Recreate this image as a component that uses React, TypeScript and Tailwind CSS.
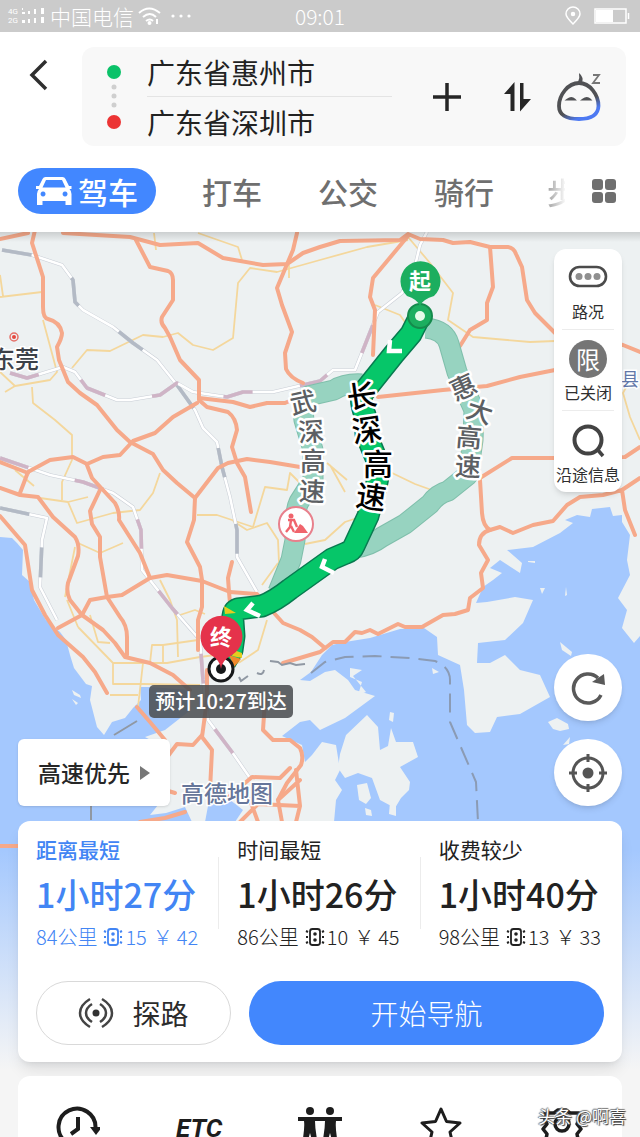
import { useState } from "react";

interface RouteOption {
  id: string;
  title: string;
  duration: string;
  distance: string;
  lights: number;
  toll: number;
}

const routes: RouteOption[] = [
  { id: "short", title: "距离最短", duration: "1小时27分", distance: "84公里", lights: 15, toll: 42 },
  { id: "fast", title: "时间最短", duration: "1小时26分", distance: "86公里", lights: 10, toll: 45 },
  { id: "cheap", title: "收费较少", duration: "1小时40分", distance: "98公里", lights: 13, toll: 33 },
];

const otherModes = ["打车", "公交", "骑行"];

const highways = [
  "M0 239L28 233M35 230L32 243L43 277L43 307Q43 318 48 319Q60 322 62 333Q62 338 57 347L59 360L68 382L80 393L97 405L117 430L130 442L153 454L163 470L177 483L195 498L194 520L187 542L200 567L202 580L202 607L198 620L198 650",
  "M63 233L130 237L160 245L198 243L223 258L263 265L287 264L303 253L320 247L340 241L400 240L408 234L420 239L443 240L453 243L470 242L490 247L508 247Q514 248 516 254L522 267L527 300L535 313L555 333L600 340L623 345L640 352",
  "M136 240L150 267L168 271Q173 273 173 280L173 300L162 317Q160 323 165 328L170 337L180 360L199 380L199 400L207 407L228 412Q236 418 237 430L232 447L237 463L245 477L251 512",
  "M297 233L293 250L277 288L282 305L292 332L285 353L286 369Q290 378 303 383",
  "M199 398L233 402L250 407L267 403L285 403L310 392",
  "M197 403L173 417L155 433L133 441L120 455L103 457L87 464L73 457L50 460L28 472L20 493M0 462L28 473",
  "M0 488L20 495L38 497L53 517L75 537Q80 545 78 556L68 583Q66 593 70 600L82 615L103 630L115 643L125 657L150 663L173 675L190 690",
  "M87 465L92 478L115 503Q120 512 119 520L140 553L150 578",
  "M100 490L90 511L92 524L100 537L100 557L107 597L120 617Q127 625 127 637L127 655",
  "M0 516L25 545L32 590L45 615L58 635L83 657L95 672L107 693",
  "M58 628L82 615L90 600L107 597L122 595L150 578L167 575L202 581L230 592L257 594L283 623L300 630L312 637L325 648",
  "M283 663L320 652L333 642L345 642L355 632L362 633L370 630L378 634L390 628L398 624L405 627L422 627L443 615L455 614L468 610L470 598L483 588L481 573L488 560L479 545Q479 533 490 530Q483 526 482 513L480 480",
  "M480 478L512 458L555 458L625 457L640 447",
  "M490 530L500 527L513 533L533 525L553 521L567 505L580 497L603 495L622 490L640 478M622 490L625 510L635 535",
  "M408 236L373 278L370 297L375 310L373 355",
  "M490 247L493 287L487 303L487 320L470 330L460 346",
  "M378 397L443 390L487 386L520 377L555 370",
  "M195 498L218 468L228 463L247 459L270 462L300 467",
  "M232 562L228 578L229 592L230 603",
  "M207 670L207 700L202 737L212 750L210 790",
  "M137 707L150 722L165 740M165 760L177 744L193 745L202 735M165 790L175 793",
  "M265 700L263 730L273 740L290 740L300 748Q304 756 301 765L287 783L278 800L282 822",
  "M225 800L245 783L252 777L280 778L290 768M240 822L258 804L300 806M262 790L250 800L258 822M278 800L300 780M296 822L300 806L296 770M140 822L165 818L185 812",
  "M0 846L24 846",
];

const localRoads = [
  "M0 297L42 292M0 275L3 296M43 320L57 372L50 380L15 386L5 392M0 372L15 386",
  "M72 368L87 350L110 351L143 335L163 337L178 333L193 345L213 350L233 338L238 283L250 268L277 272L320 260L367 247L408 240",
  "M198 233L238 247L242 260M154 233L156 250M289 265L289 278",
  "M32 387L33 403L55 420L72 435L72 460L62 482L62 500M15 470L34 486",
  "M40 498L68 502L88 497M68 502L77 523L113 513L140 510L153 493L160 473",
  "M197 515L217 515L253 527L265 487L287 490L290 473L300 483",
  "M78 627L113 663L167 663L200 657L215 655M113 663L113 684L143 684L200 685M150 663L152 645L163 645L198 640M143 663L138 707M110 695L138 695",
  "M160 580L170 600L177 620L178 657M163 645L163 663M75 547L65 597M78 543L100 553L123 543M67 600L78 627",
  "M180 615L195 610L205 614M233 521L247 530L267 523L278 540L279 563M267 620L258 650L240 662L215 668M278 563L262 585M305 544L325 540L345 522L360 517",
  "M408 237L430 263L453 293L448 320L473 337L530 342L555 341M375 305L400 315L407 325",
  "M327 463L347 480M390 472L415 484L440 493M640 440L630 417L623 393L630 380M90 615L98 642L110 643M330 465L345 492",
];

const railGrey = "M2 250L32 255L62 265L73 280L75 302L83 310L113 327L133 343L157 360L177 385L195 410L203 428L217 442L222 467L230 497L237 530L237 557L257 592";
const railPurple = "M10 373L27 378L63 367L75 372L87 388L117 400L130 400L160 395L177 383L193 392L227 397L243 392L273 392L320 381L333 370L355 370L365 345L378 312L402 293L415 266L420 245L427 232";
const railWest = "M0 458L50 475L83 482L113 493L133 507L141 530L142 570L172 608L200 640L203 680L208 720L232 752L250 778";
const railCoast = "M0 508L47 518L42 540L40 587L57 620";

const sea = [
  // western bay down to the bottom of the sheet
  "M0 537L12 538L17 543L23 550L22 575L30 582L34 600L46 620L60 632L66 640L70 655L74 668L86 684L92 686L90 700L97 727L104 735L112 722L125 718L133 708L141 700L140 687L150 687L190 690L188 712L165 730L145 737L160 745L170 790L150 815L166 813L185 807L192 822L640 822L640 1137L0 1137Z",
  // harbour inlets
  "M300 680L311 672L322 655L332 645L345 642L370 638L400 629L424 628L437 637L438 655L460 665L464 690L467 725L475 733L490 732L497 717L520 714L550 697L540 675L520 670L505 655L490 663L477 663L478 643L505 640L523 623L533 600L515 597L487 602L476 603L483 587L493 580L502 573L490 568L500 560L520 573L522 563L507 550L533 547L560 533L573 523L565 520L577 515L590 517L592 509L610 507L613 516L622 515L622 522L630 535L627 560L630 575L618 598L627 610L622 628L634 643L640 636L640 822L334 822L336 800L342 790L335 780L340 770L336 745L322 742L312 755L305 762L302 745L282 736L300 722L310 720L320 730L345 718L375 696L355 690L348 680L335 670L325 672L310 681Z",
  "M208 806L225 796L243 810L235 822L205 822Z",
];

const islands = [
  "M340 754L346 735L367 715L378 727L380 750L388 746L391 728L396 742L413 742L418 757L400 767L410 782L409 790L401 798L395 808L380 800L372 778L358 773L345 778L338 768Z",
  "M350 668L362 670L353 676L366 692L358 695L362 682L350 677Z",
  "M357 785L367 783L371 798L366 804L359 800Z",
  "M390 712L394 713L393 722L389 720Z",
  "M548 722L557 718L568 724L569 729L560 731L553 729Z",
  "M560 642L572 652L571 656L562 650Z",
  "M563 745L570 737L569 744Z",
  "M528 561L535 561L535 563L528 562Z",
  "M540 588L545 588L542 594Z",
  "M566 587L567 595L565 596Z",
  "M432 668L439 672L433 674Z",
  "M390 802L396 800L396 816L389 814Z",
  "M365 808L371 810L372 816L366 815Z",
  "M72 690L80 695L81 698L74 695Z",
  "M72 699L78 703L76 705Z",
];

const mainRoute = "M420 316L411 334L394 354L362 394Q360 402 365 415L366 434L376 458Q380 472 376 487L368 516L354 546Q352 551 346 553L332 559L290 589Q275 601 262 606L238 609Q232 611 233 622L234 636L232 650L225 662";
const wushen = "M362 384Q345 383 334 390L308 396Q302 405 304 420L313 450L313 480L299 502Q294 512 295 540L291 560L278 592";
const huida = "M426 328Q445 330 449 344L457 372L474 410L473 440L468 475L448 491Q437 494 430 504L405 524L382 537Q370 546 355 548";

interface RoadNameProps {
  chars: [string, number, number, number][];
  size: number;
  fill: string;
}

function RoadName({ chars, size, fill }: RoadNameProps) {
  return (
    <g
      fontSize={size}
      fontWeight={500}
      fill={fill}
      stroke="#fff"
      strokeWidth={5}
      strokeLinejoin="round"
      paintOrder="stroke"
      textAnchor="middle"
    >
      {chars.map(([char, x, y, angle]) => (
        <text key={char} transform={`translate(${x} ${y}) rotate(${angle})`} y={10}>
          {char}
        </text>
      ))}
    </g>
  );
}

function Rail({ d, color }: { d: string; color: string }) {
  return (
    <g fill="none" strokeLinejoin="round">
      <path d={d} stroke="#c9ced6" strokeWidth={3.6} />
      <path d={d} stroke="#fff" strokeWidth={2.6} />
      <path d={d} stroke={color} strokeWidth={3.6} strokeDasharray="30 48" />
    </g>
  );
}

function MapCanvas() {
  return (
    <svg viewBox="0 232 640 905" className="block h-auto w-full" aria-label="路线地图">
      <defs>
        <linearGradient id="sheetFade" x1="0" y1="0" x2="0" y2="1">
          <stop offset="0" stopColor="#f5f5f5" stopOpacity="0" />
          <stop offset="1" stopColor="#f5f5f5" />
        </linearGradient>
        <linearGradient id="topShade" x1="0" y1="0" x2="0" y2="1">
          <stop offset="0" stopColor="#000" stopOpacity=".14" />
          <stop offset="1" stopColor="#000" stopOpacity="0" />
        </linearGradient>
      </defs>
      <rect y="232" width="640" height="905" fill="#edf1f2" />
      <g fill="#a4c8fe">
        {sea.map((d) => (
          <path key={d} d={d} />
        ))}
      </g>
      <g fill="#edf1f2">
        {islands.map((d) => (
          <path key={d} d={d} />
        ))}
      </g>
      <g fill="none" stroke="#f4d79c" strokeWidth={1.8} strokeLinejoin="round">
        {localRoads.map((d) => (
          <path key={d} d={d} />
        ))}
      </g>
      <Rail d={railCoast} color="#b3bac5" />
      <Rail d={railGrey} color="#b3bac5" />
      <Rail d={railWest} color="#cfb4c6" />
      <Rail d={railPurple} color="#cfb4c6" />
      <g fill="none" stroke="#f6a98a" strokeWidth={4} strokeLinejoin="round" strokeLinecap="round">
        {highways.map((d) => (
          <path key={d} d={d} />
        ))}
      </g>
      <path
        d="M311 673L325 662L345 657L375 656L410 658L435 661Q450 667 450 680L450 722L476 782L478 822"
        fill="none"
        stroke="#8b9bb4"
        strokeWidth={2}
        strokeDasharray="19 9"
      />
      <path
        d="M114 735L137 721M91 806V820M239 677l2 4 7-5M257 673q6 3 7-3M270 661l8 1 4 3 8-2 6 2 9-1"
        fill="none"
        stroke="#9098a3"
        strokeWidth={2}
      />

      <circle cx="14" cy="337" r="4" fill="none" stroke="#e57068" strokeWidth={1.5} />
      <circle cx="14" cy="337" r="2" fill="#e5483f" />
      <g fontSize={24} fontWeight={500} stroke="#fff" strokeWidth={3} paintOrder="stroke">
        <text x="-9" y="368" fill="#3c4148">东莞</text>
        <text x="621" y="386" fontSize={18} fontWeight={400} fill="#6277a8">县</text>
        <text x="181" y="802" fontSize={23} fill="#66769a">高德地图</text>
      </g>

      <g fill="none" strokeLinejoin="round">
        <path d={wushen} stroke="#7fbfab" strokeWidth={21} />
        <path d={wushen} stroke="#97d3c0" strokeWidth={19} />
        <path d={huida} stroke="#7fbfab" strokeWidth={21} />
        <path d={huida} stroke="#97d3c0" strokeWidth={19} />
        <path d={mainRoute} stroke="#087a50" strokeWidth={23} />
        <path d={mainRoute} stroke="#06c669" strokeWidth={20} />
      </g>
      <path d="M224 606L236 613L225 614ZM234 650L242 653L242 658L232 656Z" fill="#e5cc1f" />
      <path d="M229 655L241 659L234 667Z" fill="#f08a2d" />
      <path
        d="M390 340L389 351L402 351M325 559L322 567L334 573M253 603L247 610L260 616"
        fill="none"
        stroke="#fff"
        strokeWidth={4.5}
      />

      <RoadName
        size={26}
        fill="#5c5f63"
        chars={[["武", 303, 402, -12], ["深", 311, 431, -4], ["高", 313, 461, 0], ["速", 312, 491, 3]]}
      />
      <RoadName
        size={26}
        fill="#5c5f63"
        chars={[["惠", 463, 387, -25], ["大", 480, 411, 18], ["高", 469, 437, 5], ["速", 468, 466, 3]]}
      />
      <RoadName
        size={30}
        fill="#000"
        chars={[["长", 362, 397, -8], ["深", 367, 431, -8], ["高", 378, 465, 0], ["速", 371, 498, 8]]}
      />

      <circle cx="296" cy="524" r="17" fill="#fff" stroke="#e8808c" strokeWidth={2} />
      <circle cx="291" cy="516" r="2.5" fill="#f0646c" />
      <path d="M288 520L294 520L297 527M291 520L290 527L286 532M291 526L294 532" fill="none" stroke="#f0646c" strokeWidth={2.4} />
      <path d="M294 533L300 524L303 526L308 533Z" fill="#f0646c" />

      <circle cx="420" cy="316" r="12" fill="#1cae5f" stroke="#158a4c" strokeWidth={2} />
      <circle cx="420" cy="316" r="5" fill="#e6fbe9" />
      <path d="M420 306Q417 299 407 296A20 20 0 1 1 434 296Q423 299 420 306Z" fill="#1cae5f" />
      <circle cx="221" cy="669" r="12" fill="#fff" stroke="#16181a" strokeWidth={3} />
      <circle cx="221" cy="669" r="5" fill="#16181a" />
      <path d="M221 669Q220 660 211 655A21 21 0 1 1 232 655Q222 660 221 669Z" fill="#e5324b" />
      <g fontSize={22} fontWeight={700} fill="#fff" textAnchor="middle">
        <text x="420" y="289">起</text>
        <text x="221" y="645">终</text>
      </g>
      <rect x="149" y="685" width="144" height="33" rx="5" fill="#4c4f52" fillOpacity=".88" />
      <text x="221" y="709" fontSize={20} fontWeight={500} fill="#fff" textAnchor="middle">
        预计10:27到达
      </text>

      <rect y="232" width="640" height="10" fill="url(#topShade)" />
      <rect y="850" width="640" height="220" fill="url(#sheetFade)" />
      <rect y="1069" width="640" height="68" fill="#f5f5f5" />
    </svg>
  );
}

function StatusBar() {
  return (
    <div className="grid h-8 grid-cols-3 items-center bg-[#cbcbcb] px-2 text-white">
      <div className="flex items-center gap-1">
        <div className="flex flex-col font-['Roboto',sans-serif] text-[8px] leading-[9px]">
          <span>4G</span>
          <span>2G</span>
        </div>
        <svg viewBox="0 0 24 18" className="h-[18px] w-6" fill="#fff" aria-hidden="true">
          <path d="M0 1h1v2H0zM0 5h3v2H0zM0 13h3v3H0zM6 4h2v3H6zM6 12h2v4H6zM12 2h2v5h-2zM12 11h2v5h-2zM19 1h3v6h-3zM19 10h3v6h-3z" />
        </svg>
        <span className="text-[21px] leading-8 font-light whitespace-nowrap">中国电信</span>
        <svg viewBox="0 0 24 20" className="h-5 w-6" fill="none" stroke="#fff" strokeWidth="2" aria-hidden="true">
          <path d="M1 7q10-9 21 0M5 11q7-6 13 0M8 15q4-3 7 0" />
          <circle cx="11.500" cy="17" r="1" fill="#fff" />
          <path d="M19 13v5" />
        </svg>
        <svg viewBox="0 0 22 4" className="ml-1 h-1 w-[22px]" fill="#fff" aria-hidden="true">
          <circle cx="3" cy="2" r="1.600" />
          <circle cx="11" cy="2" r="1.600" />
          <circle cx="19" cy="2" r="1.600" />
        </svg>
      </div>
      <span className="text-center text-[21px] leading-8 font-light">09:01</span>
      <div className="flex items-center justify-end gap-3 pr-0.5">
        <svg viewBox="0 0 18 20" className="h-5 w-[18px]" fill="none" stroke="#fff" strokeWidth="1.500" aria-hidden="true">
          <path d="M9 18Q2 11 2 8a7 7 0 0 1 14 0q0 3-7 10z" />
          <circle cx="9" cy="8" r="1.500" fill="#fff" />
        </svg>
        <svg viewBox="0 0 36 16" className="h-4 w-9" fill="none" stroke="#fff" strokeWidth="1.500" aria-hidden="true">
          <path d="M1 1h31v14H1zM34.500 5v6" />
          <path d="M2 2h17v12H2z" fill="#fff" stroke="none" />
        </svg>
      </div>
    </div>
  );
}

function SearchHeader() {
  const [from, setFrom] = useState("广东省惠州市");
  const [to, setTo] = useState("广东省深圳市");

  return (
    <header className="relative z-10 bg-white pt-[15px] pb-[18px]">
      <div className="flex pr-3.5">
        <button aria-label="返回" className="flex w-[82px] justify-center pt-3 pr-1">
          <svg viewBox="0 0 20 32" className="h-8 w-5" fill="none" stroke="#2f2f2f" strokeWidth="3.500">
            <path d="M17 2L3 16L17 30" />
          </svg>
        </button>
        <div className="flex flex-1 items-center rounded-xl bg-[#f8f8f8] pr-6 pl-6">
          <svg viewBox="0 0 16 66" className="h-[66px] w-4" aria-hidden="true">
            <circle cx="8" cy="8" r="7" fill="#0bc269" />
            <g fill="#cfcfcf">
              <circle cx="8" cy="23" r="2.500" />
              <circle cx="8" cy="32" r="2.500" />
              <circle cx="8" cy="41" r="2.500" />
            </g>
            <circle cx="8" cy="58" r="7" fill="#ec3434" />
          </svg>
          <div className="ml-[25px] min-w-0 flex-1 text-[28px] text-[#222]">
            <input
              aria-label="起点"
              value={from}
              onChange={(e) => setFrom(e.target.value)}
              className="block h-[50px] w-full border-b border-[#e4e4e4] bg-transparent outline-none"
            />
            <input
              aria-label="终点"
              value={to}
              onChange={(e) => setTo(e.target.value)}
              className="block h-[49px] w-full bg-transparent outline-none"
            />
          </div>
          <div className="ml-10 flex items-center">
            <button aria-label="添加途经点">
              <svg viewBox="0 0 30 30" className="h-[30px] w-[30px]" stroke="#262626" strokeWidth="3.500">
                <path d="M15 1v28M1 15h28" />
              </svg>
            </button>
            <button aria-label="交换起终点" className="ml-10">
              <svg viewBox="0 0 30 30" className="h-[30px] w-[30px]" fill="#262626">
                <path d="M12.500 0V29H8.500V12H2zM18 1H21.500V17H29L18 29.500z" />
              </svg>
            </button>
            <button aria-label="语音助手" className="ml-6">
              <svg viewBox="0 0 46 50" className="h-[50px] w-[46px]" fill="none">
                <defs>
                  <linearGradient id="face" x1="0.200" y1="0" x2="0.800" y2="1">
                    <stop offset="0.600" stopColor="#505154" />
                    <stop offset="0.850" stopColor="#4d79f2" />
                  </linearGradient>
                </defs>
                <path
                  d="M23 11C34 11 42.500 23 42.500 34Q42 47 23 47Q3 47 3 34C3 23 12 11 23 11z"
                  stroke="url(#face)"
                  strokeWidth="3.800"
                />
                <path d="M22 10Q24 6 23 1Q28 5 26 11z" fill="#505154" />
                <path d="M11.500 27.500q4-3 7 0zM27 27.500q4-3 7 0z" fill="#505154" stroke="#505154" strokeWidth="2" />
                <path d="M37 3h6l-6 8h7" stroke="#777" strokeWidth="1.800" />
              </svg>
            </button>
          </div>
        </div>
      </div>
      <nav className="mt-[22px] flex items-center pr-6 pl-[18px] text-[30px] leading-[46px] font-medium text-[#6f6f6f]">
        <button aria-current="page" className="flex h-[46px] w-[138px] items-center justify-center gap-1.5 rounded-full bg-[#4287ff] text-white">
          <svg viewBox="0 0 36 30" className="h-[30px] w-9" aria-hidden="true">
            <path
              fill="#fff"
              fillRule="evenodd"
              d="M9.500 1h17q2 0 3 2l3.500 7h2.500v3h-2q2 2 2 5v11h-6v-4h-23v4H1V18q0-3 2-5H0v-3h3l3.500-7q1-2 3-2zM10 4L6.500 11.500h23L26 4zM7 15.500a2.500 2.500 0 1 0 .1 0zM29 15.500a2.500 2.500 0 1 0 .1 0z"
            />
          </svg>
          驾车
        </button>
        {otherModes.map((mode) => (
          <button key={mode} className="ml-[46px] w-[60px] whitespace-nowrap nth-[n+3]:ml-14">
            {mode}
          </button>
        ))}
        <button
          aria-label="步行"
          className="ml-[53px] w-[18px] overflow-hidden bg-gradient-to-r from-[#a0a0a0] to-[#f8f8f8] bg-clip-text text-left text-transparent"
        >
          步
        </button>
        <button aria-label="更多出行方式" className="ml-auto">
          <svg viewBox="0 0 24 24" className="h-6 w-6" fill="#6f6f6f">
            <rect x="0" y="0" width="11" height="11" rx="3" />
            <rect x="13" y="0" width="11" height="11" rx="3" />
            <rect x="0" y="13" width="11" height="11" rx="3" />
            <rect x="13" y="13" width="11" height="11" rx="3" />
          </svg>
        </button>
      </nav>
    </header>
  );
}

function MapControls() {
  return (
    <div className="flex items-end justify-between px-[18px] pt-[17px] pb-[15px]">
      <button className="flex h-[67px] items-center gap-2.5 rounded-md bg-white px-5 text-[23px] font-medium text-[#262626] shadow">
        高速优先
        <svg viewBox="0 0 10 14" className="h-3.5 w-2.5" fill="#777" aria-hidden="true">
          <path d="M0 0L10 7L0 14z" />
        </svg>
      </button>
      <div className="flex w-[68px] flex-col">
        <div className="flex flex-col items-center divide-y divide-[#ececec] rounded-xl bg-white text-base leading-6 text-[#2f2f2f] shadow-md">
          <button className="flex h-[81px] w-[52px] flex-col items-center justify-end gap-2.5 pb-1.5">
            <svg viewBox="0 0 40 24" className="h-6 w-10" aria-hidden="true">
              <rect x="2" y="2" width="36" height="19" rx="9.500" fill="none" stroke="#4b4b4b" strokeWidth="2.600" />
              <g fill="#8f8f8f">
                <circle cx="11" cy="11.500" r="3.500" />
                <circle cx="20" cy="11.500" r="3.500" />
                <circle cx="29" cy="11.500" r="3.500" />
              </g>
            </svg>
            路况
          </button>
          <button className="flex h-[81px] w-[52px] flex-col items-center justify-end gap-0.5 pb-1.5 whitespace-nowrap">
            <span className="flex h-[38px] w-[38px] items-center justify-center rounded-full bg-[#757575] text-2xl text-white">
              限
            </span>
            已关闭
          </button>
          <button className="flex h-[81px] w-[52px] flex-col items-center justify-end gap-0.5 pb-1.5 whitespace-nowrap">
            <svg viewBox="0 0 36 38" className="h-[38px] w-9" fill="none" stroke="#434343" aria-hidden="true">
              <circle cx="18" cy="18" r="13.500" strokeWidth="4" />
              <path d="M27 27L33 34" strokeWidth="3.500" />
            </svg>
            沿途信息
          </button>
        </div>
        <button aria-label="刷新路线" className="mt-[162px] flex h-[67px] items-center justify-center rounded-full bg-white shadow-md">
          <svg viewBox="0 0 36 36" className="h-9 w-9" fill="none" stroke="#595959" strokeWidth="3.500">
            <path d="M31 25A14.500 14.500 0 1 1 28 8" />
            <path d="M22 12L35 15L34 4z" fill="#595959" stroke="none" />
          </svg>
        </button>
        <button aria-label="定位" className="mt-[18px] flex h-[67px] items-center justify-center rounded-full bg-white shadow-md">
          <svg viewBox="0 0 38 38" className="h-[38px] w-[38px]" fill="none" stroke="#555" strokeWidth="3">
            <circle cx="19" cy="19" r="15" />
            <circle cx="19" cy="19" r="5.500" fill="#555" stroke="none" />
            <path d="M19 0v8M19 30v8M0 19h8M30 19h8" />
          </svg>
        </button>
      </div>
    </div>
  );
}

function TrafficLight() {
  return (
    <svg viewBox="0 0 20 20" className="ml-1.5 h-5 w-5" fill="none" stroke="currentColor" strokeWidth="1.800" aria-hidden="true">
      <rect x="5" y="2" width="10" height="16" rx="2.500" />
      <path d="M1 4l2 1M1 10h2M1 16l2-1M19 4l-2 1M19 10h-2M19 16l-2-1" strokeWidth="2" />
      <circle cx="10" cy="7" r="1.800" fill="currentColor" stroke="none" />
      <circle cx="10" cy="13" r="1.800" fill="currentColor" stroke="none" />
    </svg>
  );
}

function RouteSheet() {
  const [selected, setSelected] = useState("short");

  return (
    <section className="mx-[18px] rounded-xl bg-white pt-4 pb-[17px] shadow-lg">
      <div className="grid grid-cols-3">
        {routes.map((route) => (
          <button
            key={route.id}
            aria-pressed={route.id === selected}
            onClick={() => setSelected(route.id)}
            className="group flex text-left text-[#222] aria-pressed:text-[#4285f4]"
          >
            <span className="min-w-0 flex-1 pl-[18px] whitespace-nowrap">
              <span className="block text-[21px] leading-6 group-aria-pressed:font-medium">{route.title}</span>
              <span className="mt-2.5 block text-[34px] leading-[46px] font-medium">{route.duration}</span>
              <span className="mt-2 flex h-6 items-center text-xl leading-6 font-light">
                {route.distance}
                <TrafficLight />
                <span className="ml-0.5">{route.lights}</span>
                <span className="ml-1.5">￥</span>
                <span className="ml-1">{route.toll}</span>
              </span>
            </span>
            <span className="mt-5 h-[72px] w-px bg-[#ececec] group-last:hidden" />
          </button>
        ))}
      </div>
      <div className="mt-8 flex gap-[18px] px-[18px] text-[28px] leading-10">
        <button className="flex h-16 w-[195px] items-center justify-center gap-[18px] rounded-full border border-[#d9d9d9] text-[#2c2c2c]">
          <svg viewBox="0 0 36 32" className="h-8 w-9" fill="none" stroke="#444" strokeWidth="2.500" aria-hidden="true">
            <circle cx="18" cy="16" r="3.500" fill="#333" stroke="none" />
            <path d="M12 2Q2 8 2 16T12 30M24 2Q34 8 34 16T24 30M14 7Q8 11 8 16T14 25M22 7Q28 11 28 16T22 25" />
          </svg>
          探路
        </button>
        <button className="h-16 flex-1 rounded-full bg-[#4287fd] font-light text-white">开始导航</button>
      </div>
    </section>
  );
}

function Toolbar() {
  return (
    <section className="relative mx-[18px] mt-3.5 grid grid-cols-5 rounded-xl bg-white pt-[30px] pb-6 text-[#1d1d1d]">
      <button aria-label="历史记录" className="flex justify-center">
        <svg viewBox="0 0 44 44" className="h-11 w-11" fill="none" stroke="currentColor" strokeWidth="4">
          <path d="M10 36A18.500 18.500 0 1 1 39.500 22M22 11v12l-7 5" />
          <path d="M34 21H46L40 29z" fill="currentColor" stroke="none" />
        </svg>
      </button>
      <button className="flex items-start justify-center pt-1 font-['Roboto',sans-serif] text-[26px] leading-9 font-bold italic">
        ETC
      </button>
      <button aria-label="组队出行" className="flex justify-center">
        <svg viewBox="0 0 46 44" className="h-11 w-[46px]" fill="currentColor">
          <circle cx="13" cy="5" r="4" />
          <circle cx="33" cy="5" r="4" />
          <path d="M1 11H45V15H39Q38 22 41 38H36L33 27L30 38H25Q28 24 28 15H18Q18 24 21 38H16L13 27L10 38H5Q8 22 7 15H1z" />
        </svg>
      </button>
      <button aria-label="收藏" className="flex justify-center">
        <svg viewBox="0 0 44 44" className="h-11 w-11" fill="none" stroke="currentColor" strokeWidth="3" strokeLinejoin="round">
          <path d="M22 3L27.500 15.500L41 17L31 26L34 39L22 32.500L10 39L13 26L3 17L16.500 15.500z" />
        </svg>
      </button>
      <button aria-label="设置" className="flex justify-center">
        <svg viewBox="0 0 44 44" className="h-11 w-11" fill="none" stroke="currentColor" strokeWidth="3.500" strokeLinejoin="round">
          <path d="M5 7H14L18 4H26L30 7H39V14L37 18L41 23L37 28L39 38H5L7 28L3 23L7 18L5 14z" />
          <circle cx="22" cy="18" r="7" />
        </svg>
      </button>
      <span className="absolute top-7 -right-1 text-[17px] leading-6 whitespace-nowrap text-white [text-shadow:1px_1px_1px_#333,-1px_0_1px_#666,0_-1px_1px_#777]">
        头条 @啊喜
      </span>
    </section>
  );
}

export default function App() {
  return (
    <div className="flex h-screen flex-col overflow-hidden bg-[#f5f5f5] font-['Noto_Sans_CJK_SC',sans-serif]">
      <StatusBar />
      <SearchHeader />
      <main className="relative flex-1">
        <div className="absolute inset-x-0 top-0">
          <MapCanvas />
        </div>
        <div className="relative">
          <MapControls />
          <RouteSheet />
          <Toolbar />
        </div>
      </main>
    </div>
  );
}
